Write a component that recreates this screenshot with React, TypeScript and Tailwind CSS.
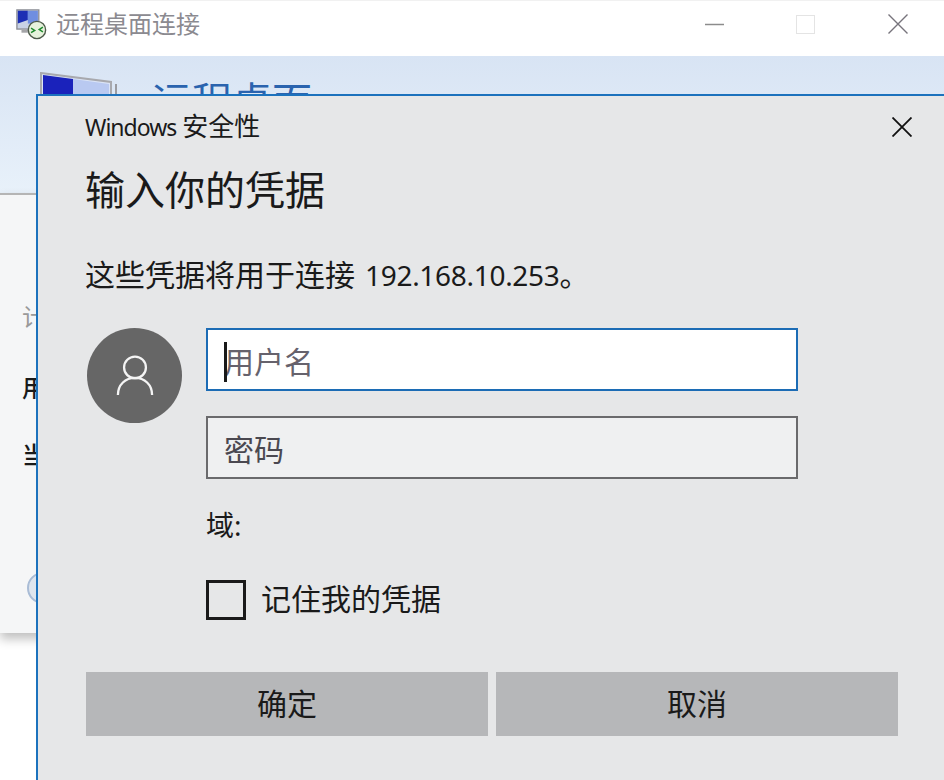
const cjk = "font-['Noto_Sans','Noto_Sans_CJK_SC',sans-serif]";

function SmallMonitor() {
  return (
    <svg width="31" height="31" viewBox="0 0 34 34" className="shrink-0">
      <rect x="1" y="1" width="24" height="21" fill="#c9d3e6" stroke="#8d8f96" strokeWidth="1.5" />
      <path d="M2 2h11v10l-11 4z" fill="#1c2fb4" />
      <path d="M13 2h11v14H13z" fill="#6f8ee0" />
      <rect x="6" y="23" width="14" height="3" fill="#a5a5a8" />
      <circle cx="23" cy="23" r="9.5" fill="#e6f2dc" stroke="#4d5a4a" strokeWidth="1.5" />
      <path d="M16.5 21l4 2.5-4 2.5M29.5 20l-4 2.5 4 2.5" fill="none" stroke="#1f8a2e" strokeWidth="1.6" />
    </svg>
  );
}

function LargeMonitor() {
  return (
    <svg width="80" height="60" viewBox="0 0 80 60" className="shrink-0">
      <path d="M1 1l70 9v50H1z" fill="#dbe4f6" stroke="#a8a9ae" strokeWidth="2" />
      <path d="M3 3l30 4v53H3z" fill="#1a22bb" />
      <path d="M33 7l36 5v48H33z" fill="#b9c9f1" />
      <path d="M76 12v48" stroke="#9a9ba0" strokeWidth="2" />
    </svg>
  );
}

function WindowButtons() {
  return (
    <div className="flex items-center">
      <svg width="20" height="20" viewBox="0 0 20 20" className="mr-[71px]">
        <path d="M0 10.5h19" stroke="#8c8c8c" strokeWidth="1.5" />
      </svg>
      <div className="mr-[73px] h-[19px] w-[19px] border border-[#e4e4e4]" />
      <svg width="20" height="20" viewBox="0 0 20 20" className="mr-[36px]">
        <path d="M0.5 0.5l19 19M19.5 0.5l-19 19" stroke="#77747c" strokeWidth="1.4" />
      </svg>
    </div>
  );
}

function BackWindow() {
  return (
    <div className="flex h-full flex-col">
      <div className="flex h-14 items-center justify-between border-t border-[#f1f1f1] bg-white pb-[9px]">
        <div className="flex items-center">
          <div className="ml-[16px]">
            <SmallMonitor />
          </div>
          <span className="ml-[9px] text-2xl leading-8 text-[#8b8a90]">远程桌面连接</span>
        </div>
        <WindowButtons />
      </div>
      <div className="flex h-[137px] items-start overflow-hidden bg-gradient-to-b from-[#d8e4f4] to-[#e8f1fa] pl-10 pt-[16px]">
        <LargeMonitor />
        <span className="ml-8 mt-[1px] text-[40px] leading-[56px] text-[#2a63ae]">远程桌面</span>
      </div>
      <div className="flex h-[440px] flex-col border-t-2 border-[#b5b5b5] bg-[#f5f6f7] pl-[22px] shadow-[0_6px_10px_rgba(0,0,0,0.25)]">
        <span className="mt-[106px] text-2xl leading-8 text-[#9a9a9a]">计算机</span>
        <span className="mt-[39px] text-2xl font-medium leading-8 text-[#1a1a1a]">用户名</span>
        <span className="mt-[35px] text-2xl font-medium leading-8 text-[#1a1a1a]">当前</span>
        <div className="ml-[5px] mt-[101px] h-8 w-8 rounded-full border-2 border-[#a9bcd6] bg-[#dfe6ee]" />
      </div>
    </div>
  );
}

function Dialog() {
  return (
    <div className="absolute bottom-0 left-9 right-0 top-[94px] flex flex-col border-l-2 border-t-2 border-[#1c72bd] bg-[#e6e7e8] pl-12 pr-[46px] text-[#1a1a1a]">
      <div className="mt-[15px] flex h-8 items-center justify-between">
        <span className="-ml-px -mt-0.5 flex items-baseline leading-8">
          <span className="text-[23px] tracking-[-1px]">Windows</span>
          <span className="ml-[6px] text-[26px]">安全性</span>
        </span>
        <svg width="20" height="20" viewBox="0 0 20 20" className="mr-[-14px]">
          <path d="M0.5 0.5l19 19M19.5 0.5l-19 19" stroke="#111" strokeWidth="1.8" />
        </svg>
      </div>
      <h1 className="-ml-px mt-[19px] text-[40px] font-normal leading-[56px]">输入你的凭据</h1>
      <p className="-ml-px mt-[37px] flex items-baseline leading-10">
        <span className="text-[30px]">这些凭据将用于连接</span>
        <span className="ml-[10px] text-[28px] tracking-[-0.3px]">192.168.10.253</span>
        <span className="text-[30px]">。</span>
      </p>
      <div className="mt-[33px] flex">
        <div className="ml-px flex h-[95px] w-[95px] items-center justify-center rounded-full bg-[#666666]">
          <svg width="38" height="42" viewBox="0 0 40 44" fill="none" stroke="#f4f4f4" strokeWidth="2.4">
            <circle cx="20" cy="13" r="11.5" />
            <path d="M2 42c0-11 8-18 18-18s18 7 18 18" />
          </svg>
        </div>
        <div className="ml-6 flex w-[592px] flex-col gap-[25px]">
          <div className="relative flex h-[63px] items-center border-2 border-[#1c6cb5] bg-white pl-4">
            <span className="absolute left-4 top-3 h-10 w-[3px] bg-[#1a1a1a]" />
            <span className="mt-1 text-[30px] leading-10 text-[#66626c]">用户名</span>
          </div>
          <div className="flex h-[63px] items-center border-2 border-[#6a6a6c] bg-[#eff0f1] pl-4">
            <span className="mt-1 text-[30px] leading-10 text-[#4a4850]">密码</span>
          </div>
        </div>
      </div>
      <div className="ml-[120px] mt-[26px] text-[28px] leading-10">域:</div>
      <label className="ml-[120px] mt-[35px] flex items-center gap-[15px]">
        <span className="h-10 w-10 border-[3px] border-[#1a1a1a]" />
        <span className="-mt-0.5 text-[30px] leading-10">记住我的凭据</span>
      </label>
      <div className="mt-[52px] flex gap-2">
        <button className="h-16 flex-1 bg-[#b6b7b9] pb-0.5 text-[30px] text-[#1a1a1a]">确定</button>
        <button className="h-16 flex-1 bg-[#b6b7b9] pb-0.5 text-[30px] text-[#1a1a1a]">取消</button>
      </div>
    </div>
  );
}

export default function App() {
  return (
    <div className={`relative h-[780px] w-[944px] overflow-hidden bg-white ${cjk}`}>
      <BackWindow />
      <Dialog />
    </div>
  );
}
